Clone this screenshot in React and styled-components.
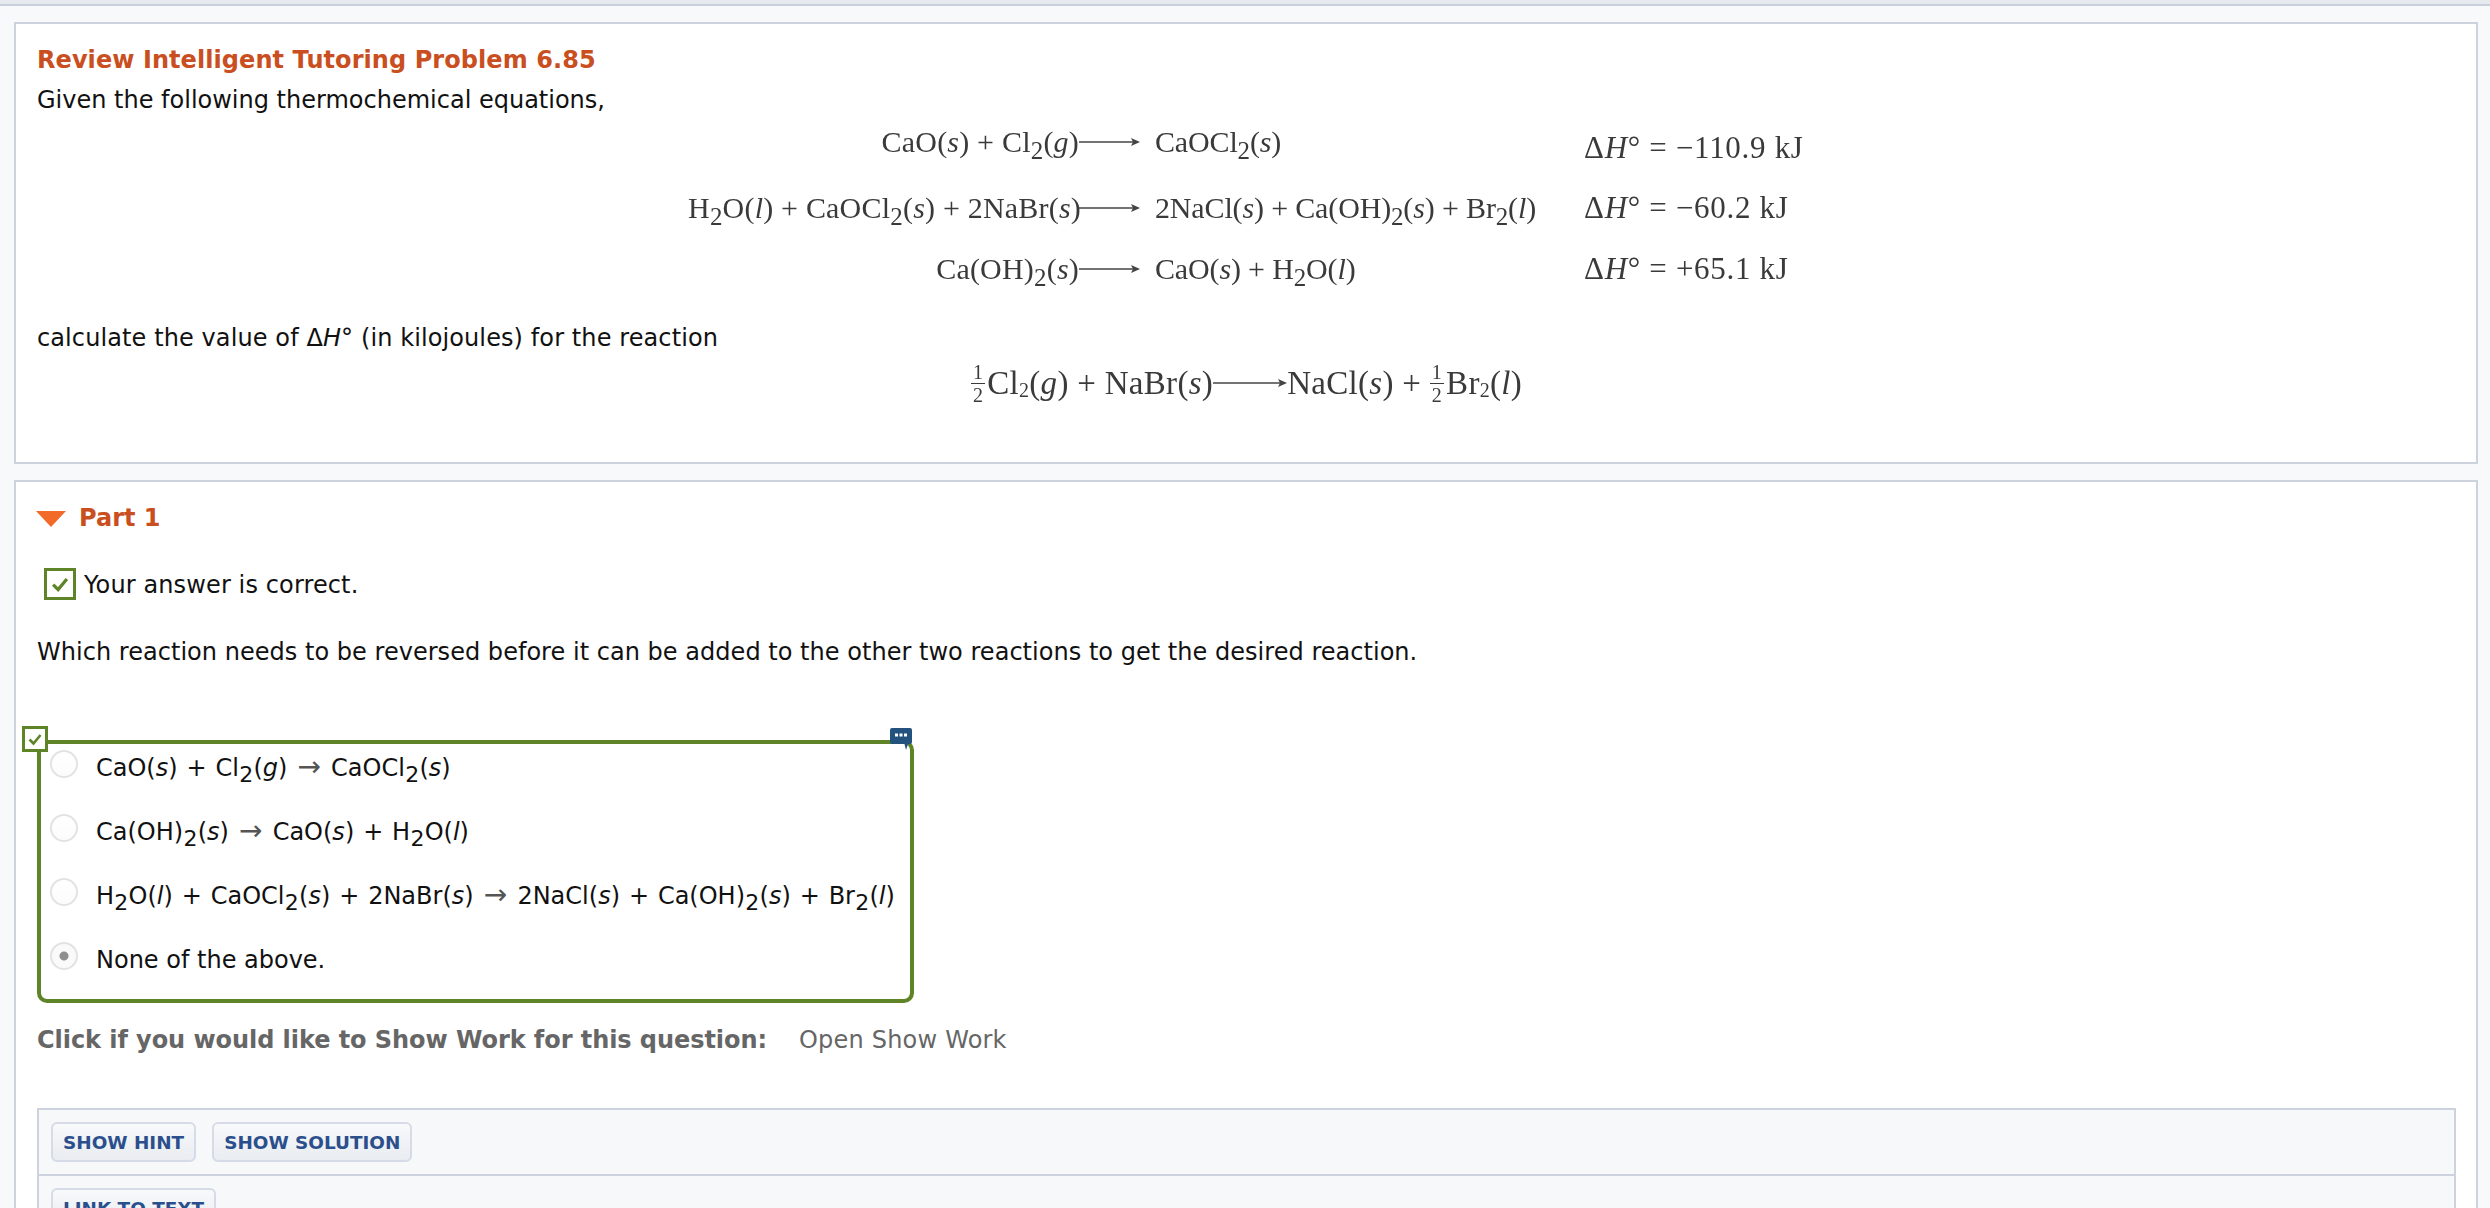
import React from 'react'
import styled, { createGlobalStyle } from 'styled-components'

const GlobalStyle = createGlobalStyle`
	html, body {
		margin: 0;
		padding: 0;
		height: 100%;
		overflow: hidden;
		background: #f7f9fb;
	}
	body {
		font-family: "DejaVu Sans", Verdana, sans-serif;
		font-size: 24px;
		color: #111;
	}
	sub {
		line-height: 0;
	}
`

const Arrow = ({ width = 61 }) => (
	<ArrowSvg width={width} height="14" viewBox={`0 0 ${width} 14`}>
		<path d={`M0 7H${width - 2}`} stroke="#444" strokeWidth="1.6" fill="none" />
		<path d={`M${width - 9} 3L${width} 7L${width - 9} 11L${width - 7} 7Z`} fill="#444" />
	</ArrowSvg>
)

const Half = () => (
	<Fraction>
		<span>1</span>
		<span>2</span>
	</Fraction>
)

const Check = ({ size }) => (
	<svg width={size} height={size} viewBox="0 0 16 16">
		<path d="M2.5 8.5L6.5 12.5L13.5 4" stroke="#5f8427" strokeWidth="2.6" fill="none" />
	</svg>
)

const App = () => {
	const equations = [
		{
			id: 1,
			top: 0,
			dropEnthalpy: true,
			left: <>CaO(<i>s</i>) + Cl<sub>2</sub>(<i>g</i>)</>,
			right: <>CaOCl<sub>2</sub>(<i>s</i>)</>,
			enthalpy: '−110.9 kJ',
		},
		{
			id: 2,
			top: 30,
			left: <>H<sub>2</sub>O(<i>l</i>) + CaOCl<sub>2</sub>(<i>s</i>) + 2NaBr(<i>s</i>)</>,
			right: <>2NaCl(<i>s</i>) + Ca(OH)<sub>2</sub>(<i>s</i>) + Br<sub>2</sub>(<i>l</i>)</>,
			enthalpy: '−60.2 kJ',
		},
		{
			id: 3,
			top: 21,
			left: <>Ca(OH)<sub>2</sub>(<i>s</i>)</>,
			right: <>CaO(<i>s</i>) + H<sub>2</sub>O(<i>l</i>)</>,
			enthalpy: '+65.1 kJ',
		},
	]

	const options = [
		{ id: 1, label: <>CaO(<i>s</i>) <Op>+</Op> Cl<sub>2</sub>(<i>g</i>) <ReactArrow>→</ReactArrow> CaOCl<sub>2</sub>(<i>s</i>)</> },
		{ id: 2, label: <>Ca(OH)<sub>2</sub>(<i>s</i>) <ReactArrow>→</ReactArrow> CaO(<i>s</i>) <Op>+</Op> H<sub>2</sub>O(<i>l</i>)</> },
		{ id: 3, label: <>H<sub>2</sub>O(<i>l</i>) <Op>+</Op> CaOCl<sub>2</sub>(<i>s</i>) <Op>+</Op> 2NaBr(<i>s</i>) <ReactArrow>→</ReactArrow> 2NaCl(<i>s</i>) <Op>+</Op> Ca(OH)<sub>2</sub>(<i>s</i>) <Op>+</Op> Br<sub>2</sub>(<i>l</i>)</> },
		{ id: 4, label: 'None of the above.', selected: true },
	]

	return (
		<Page>
			<GlobalStyle />
			<TopStrip />
			<Content>
				<Card>
					<Title>Review Intelligent Tutoring Problem 6.85</Title>
					<Line $top={4}>Given the following thermochemical equations,</Line>
					<Equations>
						{equations.map((eq) => (
							<EquationRow key={eq.id} $top={eq.top}>
								<EqLeft>{eq.left}</EqLeft>
								<Arrow />
								<EqRight>{eq.right}</EqRight>
								<Enthalpy $drop={eq.dropEnthalpy}>Δ<i>H</i>° = {eq.enthalpy}</Enthalpy>
							</EquationRow>
						))}
					</Equations>
					<Line $top={31} $spacing={0.1}>calculate the value of Δ<i>H</i>° (in kilojoules) for the reaction</Line>
					<TargetEquation>
						<Half />Cl<sub>2</sub>(<i>g</i>) + NaBr(<i>s</i>)<Arrow width={74} />NaCl(<i>s</i>) + <Half />Br<sub>2</sub>(<i>l</i>)
					</TargetEquation>
				</Card>

				<PartCard>
					<PartHeader>
						<Triangle />
						<PartTitle>Part 1</PartTitle>
					</PartHeader>
					<Status>
						<StatusBox><Check size={20} /></StatusBox>
						Your answer is correct.
					</Status>
					<Line $top={31} $spacing={0.03}>Which reaction needs to be reversed before it can be added to the other two reactions to get the desired reaction.</Line>
					<AnswerBox>
						<CornerCheck><Check size={16} /></CornerCheck>
						<NoteIcon width="22" height="22" viewBox="0 0 22 22">
							<path d="M2 0H20A2 2 0 0 1 22 2V14A2 2 0 0 1 20 16H18L16 22L14.5 16H2A2 2 0 0 1 0 14V2A2 2 0 0 1 2 0Z" fill="#24527f" />
							<rect x="5" y="5.500" width="3" height="3" fill="#fff" />
							<rect x="9.500" y="5.500" width="3" height="3" fill="#fff" />
							<rect x="14" y="5.500" width="3" height="3" fill="#fff" />
						</NoteIcon>
						{options.map((option) => (
							<Option key={option.id}>
								<Radio $selected={option.selected} />
								<span>{option.label}</span>
							</Option>
						))}
					</AnswerBox>
					<ShowWork>
						<ShowWorkLabel>Click if you would like to Show Work for this question:</ShowWorkLabel>
						<ShowWorkLink>Open Show Work</ShowWorkLink>
					</ShowWork>
					<ButtonPanel>
						<ButtonRow>
							<PanelButton>SHOW HINT</PanelButton>
							<PanelButton>SHOW SOLUTION</PanelButton>
						</ButtonRow>
						<ButtonRow>
							<PanelButton>LINK TO TEXT</PanelButton>
						</ButtonRow>
					</ButtonPanel>
				</PartCard>
			</Content>
		</Page>
	)
}

const Page = styled.div`
	height: 100vh;
	overflow: hidden;
	background: #f7f9fb;
`

const TopStrip = styled.div`
	height: 4px;
	background: #e6e9ee;
	border-bottom: 2px solid #c9d0dc;
`

const Content = styled.div`
	display: flex;
	flex-direction: column;
	gap: 16px;
	padding: 16px 12px 0 14px;
`

const Card = styled.section`
	background: #fff;
	border: 2px solid #ccd3df;
	padding: 18px 20px 52px 21px;
`

const PartCard = styled(Card)`
	padding-bottom: 0;
`

const Title = styled.h1`
	margin: 0;
	font-size: 24px;
	line-height: 36px;
	font-weight: bold;
	letter-spacing: 0.07px;
	color: #c94f21;
`

const Line = styled.p`
	margin: ${(p) => p.$top}px 0 0;
	line-height: 36px;
	letter-spacing: ${(p) => p.$spacing || 0}px;
`

const Equations = styled.div`
	display: flex;
	flex-direction: column;
	align-items: center;
	font-family: "Liberation Serif", "Times New Roman", serif;
	font-size: 30px;
	color: #3a3a3a;
	filter: blur(0.4px);
`

const EquationRow = styled.div`
	display: grid;
	grid-template-columns: 391px 61px 387px 278px;
	align-items: center;
	height: 40px;
	margin-top: ${(p) => p.$top}px;
	white-space: nowrap;
`

const EqLeft = styled.div`
	text-align: right;
	letter-spacing: 0.2px;
`

const EqRight = styled.div`
	padding-left: 15px;
	letter-spacing: -0.15px;
`

const Enthalpy = styled.div`
	margin-left: 57px;
	font-size: 31px;
	letter-spacing: 0.7px;
	padding-top: ${(p) => (p.$drop ? '12px' : '0')};
`

const ArrowSvg = styled.svg`
	display: block;
	flex-shrink: 0;
`

const TargetEquation = styled.div`
	display: flex;
	align-items: center;
	justify-content: center;
	height: 54px;
	white-space: pre;
	font-family: "Liberation Serif", "Times New Roman", serif;
	font-size: 33px;
	letter-spacing: 0.3px;
	color: #3a3a3a;
	filter: blur(0.4px);

	sub {
		font-size: 20px;
		margin-top: 14px;
	}
`

const Fraction = styled.span`
	display: inline-flex;
	flex-direction: column;
	align-items: center;
	font-size: 20px;
	line-height: 22px;
	margin-right: 2px;

	span:first-child {
		border-bottom: 1.5px solid #3a3a3a;
		padding: 0 2px;
	}
`

const PartHeader = styled.div`
	display: flex;
	align-items: center;
	gap: 13px;
	height: 36px;
	margin-left: -1px;
`

const Triangle = styled.span`
	width: 0;
	height: 0;
	margin-top: 2px;
	border-left: 15px solid transparent;
	border-right: 15px solid transparent;
	border-top: 16px solid #f26a2a;
`

const PartTitle = styled.h2`
	margin: 0;
	font-size: 24px;
	font-weight: bold;
	color: #c94f21;
`

const Status = styled.div`
	display: flex;
	align-items: center;
	gap: 8px;
	height: 36px;
	margin: 31px 0 0 7px;
	letter-spacing: 0.12px;
`

const StatusBox = styled.span`
	display: flex;
	align-items: center;
	justify-content: center;
	box-sizing: border-box;
	width: 32px;
	height: 32px;
	margin-top: -2px;
	border: 3px solid #5f8427;
`

const AnswerBox = styled.div`
	position: relative;
	box-sizing: border-box;
	width: 877px;
	height: 263px;
	margin-top: 70px;
	padding: 6px 0 0 9px;
	display: flex;
	flex-direction: column;
	gap: 28px;
	border: 4px solid #5f8427;
	border-radius: 0 10px 10px 10px;
`

const CornerCheck = styled.span`
	position: absolute;
	left: -19px;
	top: -18px;
	box-sizing: border-box;
	width: 26px;
	height: 26px;
	display: flex;
	align-items: center;
	justify-content: center;
	background: #fff;
	border: 3px solid #5f8427;
`

const NoteIcon = styled.svg`
	position: absolute;
	right: -2px;
	top: -16px;
`

const Option = styled.label`
	display: flex;
	align-items: flex-start;
	gap: 18px;
	height: 36px;
	line-height: 36px;
	white-space: nowrap;

	sub {
		font-size: 22px;
		margin: 0 0.25px;
	}
`

const Radio = styled.span`
	box-sizing: border-box;
	flex-shrink: 0;
	width: 28px;
	height: 28px;
	border-radius: 50%;
	border: 2px solid #e3e3e3;
	background: ${(p) => (p.$selected ? 'radial-gradient(circle, #8f8f8f 0 4px, #fafafa 5px)' : 'linear-gradient(#fff, #fcfcfc)')};
`

const ReactArrow = styled.span`
	color: #555;
	font-size: 28px;
	line-height: 0;
	margin: 0 2.5px;
`

const Op = styled.span`
	margin: 0 1.25px;
`

const ShowWork = styled.div`
	display: flex;
	gap: 32px;
	margin-top: 19px;
	line-height: 36px;
	color: #666;
`

const ShowWorkLabel = styled.strong`
	letter-spacing: -0.06px;
`

const ShowWorkLink = styled.span`
	letter-spacing: 0.2px;
`

const ButtonPanel = styled.div`
	margin-top: 50px;
	background: #f6f8fa;
	border: 2px solid #ccd3df;
`

const ButtonRow = styled.div`
	display: flex;
	gap: 16px;
	padding: 12px;
	height: 40px;

	& + & {
		border-top: 2px solid #ccd3df;
	}
`

const PanelButton = styled.button`
	box-sizing: border-box;
	height: 40px;
	padding: 0 10px;
	border: 2px solid #d5dce7;
	border-radius: 6px;
	background: linear-gradient(#f7f9fb, #e9ecf0);
	font-family: "DejaVu Sans", Verdana, sans-serif;
	font-size: 18.4px;
	font-weight: bold;
	color: #2b4f8c;
`

export default App
